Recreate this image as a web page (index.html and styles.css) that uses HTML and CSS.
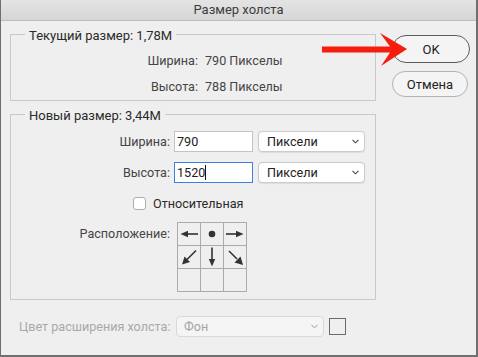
FILE: index.html
```html
<!DOCTYPE html>
<html lang="ru">
<head>
<meta charset="utf-8">
<title>Размер холста</title>
<link rel="stylesheet" href="styles.css">
</head>
<body>
<div class="window">
  <div class="titlebar">Размер холста</div>
  <div class="body">
    <div class="main">
      <fieldset class="group group-current">
        <legend>Текущий размер: 1,78M</legend>
        <div class="info-grid">
          <span class="lbl">Ширина:</span><span class="val">790 Пикселы</span>
          <span class="lbl">Высота:</span><span class="val">788 Пикселы</span>
        </div>
      </fieldset>
      <fieldset class="group group-new">
        <legend>Новый размер: 3,44M</legend>
        <div class="row">
          <span class="lbl col1">Ширина:</span>
          <div class="field">790</div>
          <div class="select"><span>Пиксели</span><svg class="chev" width="7" height="5" viewBox="0 0 7 5"><polyline points="0.5,0.8 3.5,3.8 6.5,0.8" fill="none" stroke="#444" stroke-width="1.1"/></svg></div>
        </div>
        <div class="row row2">
          <span class="lbl col1">Высота:</span>
          <div class="field focused">1520<span class="caret"></span></div>
          <div class="select"><span>Пиксели</span><svg class="chev" width="7" height="5" viewBox="0 0 7 5"><polyline points="0.5,0.8 3.5,3.8 6.5,0.8" fill="none" stroke="#444" stroke-width="1.1"/></svg></div>
        </div>
        <div class="check-row">
          <span class="checkbox"></span><span class="check-text">Относительная</span>
        </div>
        <div class="anchor-row">
          <span class="lbl col1 anchor-lbl">Расположение:</span>
          <div class="anchor-grid">
            <div class="cell"><svg width="22" height="22" viewBox="0 0 22 22"><line x1="9" y1="11" x2="20" y2="11" stroke="#333" stroke-width="1.6"/><polygon points="2.5,11 10,7.8 10,14.2" fill="#333"/></svg></div>
            <div class="cell"><svg width="22" height="22" viewBox="0 0 22 22"><circle cx="11" cy="11" r="3.3" fill="#333"/></svg></div>
            <div class="cell"><svg width="22" height="22" viewBox="0 0 22 22"><line x1="2" y1="11" x2="13" y2="11" stroke="#333" stroke-width="1.6"/><polygon points="19.5,11 12,7.8 12,14.2" fill="#333"/></svg></div>
            <div class="cell"><svg width="22" height="22" viewBox="0 0 22 22"><line x1="18" y1="4.5" x2="9" y2="13.5" stroke="#333" stroke-width="1.6"/><polygon points="4,18.5 6.5,10.5 12,16" fill="#333"/></svg></div>
            <div class="cell"><svg width="22" height="22" viewBox="0 0 22 22"><line x1="11" y1="1.5" x2="11" y2="13" stroke="#333" stroke-width="1.6"/><polygon points="11,20.5 7.8,13 14.2,13" fill="#333"/></svg></div>
            <div class="cell"><svg width="22" height="22" viewBox="0 0 22 22"><line x1="5" y1="5" x2="13" y2="13" stroke="#333" stroke-width="1.6"/><polygon points="19,19 10.5,16.5 16.5,10.5" fill="#333"/></svg></div>
            <div class="cell"></div>
            <div class="cell"></div>
            <div class="cell"></div>
          </div>
        </div>
      </fieldset>
      <div class="ext-row">
        <span class="ext-lbl">Цвет расширения холста:</span>
        <div class="select disabled"><span>Фон</span><svg class="chev" width="7" height="5" viewBox="0 0 7 5"><polyline points="0.5,0.8 3.5,3.8 6.5,0.8" fill="none" stroke="#b5b5b5" stroke-width="1.1"/></svg></div>
        <span class="swatch"></span>
      </div>
    </div>
    <div class="side">
      <div class="btn btn-ok">OK</div>
      <div class="btn btn-cancel">Отмена</div>
    </div>
  </div>
  <svg class="red-arrow" width="90" height="40" viewBox="0 0 90 40"><polygon points="2,16.5 70,16.5 60,3 87,19 61,36 70,22.5 2,22.5" fill="#f61d0e"/></svg>
</div>
</body>
</html>
```
FILE: styles.css
```css
* { box-sizing: border-box; }
html, body { margin: 0; padding: 0; }
body {
  font-family: Roboto, "Liberation Sans", Arial, sans-serif;
  font-size: 12.6px;
  color: #2a2a2a;
  background: #efefef;
}
.window {
  position: relative;
  width: 478px;
  height: 357px;
  background: #efefef;
  border-left: 1px solid #6f6f6f;
  border-right: 2px solid #6f6f6f;
  border-bottom: 2px solid #6f6f6f;
  overflow: hidden;
}
.titlebar {
  height: 21px;
  line-height: 19px;
  font-size: 13px;
  text-align: center;
  color: #3c3c3c;
  background: linear-gradient(#e4e4e4, #d6d6d6);
  border-bottom: 1px solid #bdbdbd;
}
.body {
  display: flex;
  padding-left: 9px;
}
.main {
  width: 366px;
}
.group {
  margin: 5px 0 0 0;
  padding: 0;
  border: 1px solid #c9c9c9;
  min-width: 0;
}
.group legend {
  margin-left: 14px;
  padding: 2px 4px 0;
  line-height: 15px;
  font-size: 13px;
  color: #2a2a2a;
}
.info-grid {
  display: grid;
  grid-template-columns: 187px 1fr;
  column-gap: 7px;
  grid-auto-rows: 26px;
  align-items: center;
  padding: 4px 0 1px;
  color: #454545;
}
.info-grid .lbl { text-align: right; }
.group-new {
  padding: 8px 0 7px;
}
.row {
  display: flex;
  align-items: center;
  height: 21px;
}
.row2 { margin-top: 10px; }
.lbl { color: #454545; }
.col1 {
  width: 159px;
  text-align: right;
  flex: none;
}
.field {
  margin-left: 4px;
  width: 79px;
  height: 21px;
  line-height: 19px;
  padding-left: 2px;
  background: #fff;
  border: 1px solid #c3c3c3;
  color: #222;
}
.field.focused {
  border-color: #3b7fe3;
}
.caret {
  display: inline-block;
  width: 1px;
  height: 15px;
  background: #111;
  vertical-align: -3px;
}
.select {
  position: relative;
  display: flex;
  align-items: center;
  justify-content: space-between;
  margin-left: 5px;
  width: 107px;
  height: 21px;
  padding: 0 5px 0 8px;
  background: #fff;
  border: 1px solid #cbcbcb;
  border-radius: 4px;
  box-shadow: 0 0.5px 1px rgba(0,0,0,0.08);
  color: #222;
}
.chev { flex: none; }
.check-row {
  display: flex;
  align-items: center;
  margin-top: 13px;
  padding-left: 122px;
  height: 14px;
}
.checkbox {
  width: 13px;
  height: 13px;
  background: #fff;
  border: 1px solid #adadad;
  border-radius: 3px;
}
.check-text {
  margin-left: 7px;
  color: #2a2a2a;
}
.anchor-row {
  display: flex;
  align-items: flex-start;
  margin-top: 12px;
}
.anchor-lbl {
  line-height: 22px;
  margin-top: 1px;
}
.anchor-grid {
  margin-left: 7px;
  display: grid;
  grid-template-columns: repeat(3, 22px);
  grid-auto-rows: 22px;
  gap: 1px;
  padding: 1px;
  background: #ababab;
}
.cell {
  background: #efefef;
}
.cell svg { display: block; }
.ext-row {
  display: flex;
  align-items: center;
  margin-top: 16px;
  height: 21px;
}
.ext-lbl {
  width: 159px;
  padding-left: 9px;
  color: #a9a9a9;
  white-space: nowrap;
  flex: none;
}
.select.disabled {
  margin-left: 7px;
  width: 148px;
  background: #f5f5f5;
  border-color: #d9d9d9;
  box-shadow: none;
  color: #a5a5a5;
  padding-left: 7px;
}
.swatch {
  margin-left: 5px;
  width: 17px;
  height: 17px;
  border: 1px solid #6a6a6a;
  background: #efefef;
}
.side {
  display: flex;
  flex-direction: column;
  margin-left: 16px;
  padding-top: 14px;
  width: 78px;
}
.btn {
  display: flex;
  align-items: center;
  justify-content: center;
  background: #f4f4f4;
  color: #222;
  font-size: 13px;
}
.btn-ok {
  height: 28px;
  border: 1px solid #5c5c5c;
  border-radius: 14px;
}
.btn-cancel {
  margin-top: 8px;
  width: 76px;
  height: 26px;
  border: 1px solid #b3b3b3;
  border-radius: 13px;
}
.red-arrow {
  position: absolute;
  left: 319px;
  top: 30px;
}
```
